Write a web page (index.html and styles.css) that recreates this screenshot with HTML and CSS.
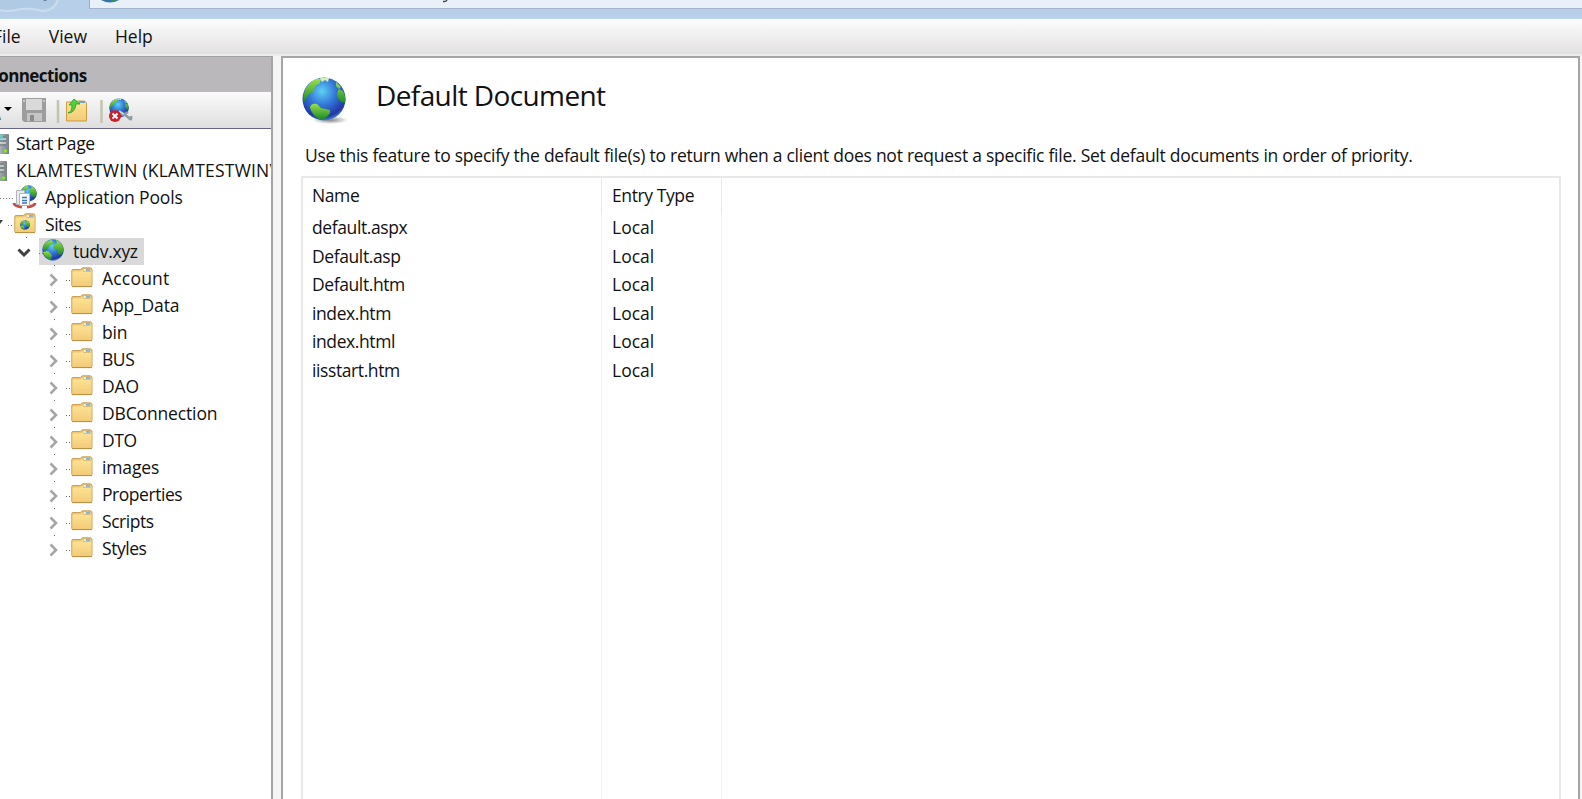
FILE: index.html
```html
<!DOCTYPE html>
<html lang="en">
<head>
<meta charset="utf-8">
<title>Internet Information Services (IIS) Manager</title>
<link rel="stylesheet" href="styles.css">
</head>
<body>
<svg class="defs" width="0" height="0">
  <defs>
    <radialGradient id="sea" cx="45%" cy="32%" r="70%"><stop offset="0" stop-color="#5fd0f4"/><stop offset=".45" stop-color="#3378d8"/><stop offset=".85" stop-color="#2336a4"/><stop offset="1" stop-color="#4a8fd8"/></radialGradient>
    <linearGradient id="land" x1="0" y1="0" x2="0" y2="1"><stop offset="0" stop-color="#9be04a"/><stop offset="1" stop-color="#1b8a28"/></linearGradient>
    <linearGradient id="gold" x1="0" y1="0" x2="0" y2="1"><stop offset="0" stop-color="#fde596"/><stop offset="1" stop-color="#f2cb78"/></linearGradient>
    <linearGradient id="metal" x1="0" y1="0" x2="1" y2="0"><stop offset="0" stop-color="#c9ced0"/><stop offset="1" stop-color="#778084"/></linearGradient>
    <radialGradient id="shade"><stop offset="0" stop-color="#777" stop-opacity=".9"/><stop offset="1" stop-color="#777" stop-opacity="0"/></radialGradient>
    <symbol id="globe" viewBox="0 0 44 44">
      <circle cx="22" cy="22" r="21.5" fill="url(#sea)"/>
      <path fill="url(#land)" d="M2 25C0 15 5 6 14 2l5 0-1 4-5 3-1 5-5 3-2 3z"/>
      <path fill="#d9efbb" d="M18 1h9l-1 4-3-2-3 2z"/>
      <path fill="url(#land)" d="M8 31c0-4 4-5 7-4l4 4 9 2c1 4-3 7-6 9-6 1-11-3-14-11z"/>
      <path fill="url(#land)" d="M37 12l4 2c2 4 3 8 2 12l-4-1-3-4-1-5zM34 5l5 5-2 2-3-3z"/>
    </symbol>
    <symbol id="site" viewBox="0 0 22 22">
      <circle cx="11" cy="11" r="10.7" fill="url(#sea)"/>
      <path fill="url(#land)" d="M1 9C2 4 6 1 10 1l1 3-4 3-1 3-4 2z"/>
      <path fill="url(#land)" d="M1 13l5-1 4 4-1 5C5 20 2 17 1 13z"/>
      <path fill="url(#land)" d="M14 1c4 1 7 5 8 10l-3 5-3-1-1-4-4-2 2-4 2-1z"/>
    </symbol>
    <symbol id="folder" viewBox="0 0 22 21">
      <path d="M.8 3.5q0-1 1-1h7.5l2-1.700h7.700q2 0 2 2V18.500q0 1-1 1H1.800q-1 0-1-1z" fill="#eec771" stroke="#c8a05a"/>
      <path d="M1.500 5.500q0-1 1-1h7l2-1.500h9v16h-19z" fill="url(#gold)"/>
      <rect x="12" y="1.500" width="8" height="3" rx="1" fill="#f6ead0" stroke="#c8a05a" stroke-width=".6"/>
      <rect x="15" y="2.200" width="4" height="1.500" fill="#6ba6cc"/>
      <path d="M1 19.600h20" stroke="#b89048"/>
    </symbol>
    <symbol id="server" viewBox="0 0 14 21">
      <path d="M0 1h13q1 0 1 1v19H0z" fill="url(#metal)"/>
      <path d="M0 4h11M0 8h11M0 12h11" stroke="#6a757a" stroke-width="1.200"/>
      <path d="M0 6h11M0 10h11" stroke="#e9eeee"/>
      <circle cx="10.500" cy="18" r="1.700" fill="#7cf026"/>
    </symbol>
    <symbol id="closed" viewBox="0 0 10 14"><path d="M1.500 1.500L7 7l-5.500 5.500" fill="none" stroke="#a6a6a6" stroke-width="2.600"/></symbol>
    <symbol id="open" viewBox="0 0 14 10"><path d="M1.500 1.500L7 7l5.500-5.500" fill="none" stroke="#404040" stroke-width="3"/></symbol>
    <symbol id="leaf" viewBox="0 0 45 27"><use href="#closed" y="8" x="0" width="10" height="14"/><path d="M5 .5h1M17 15.500h4" stroke="#666" stroke-dasharray="1 2"/><use href="#folder" x="22" y="2" width="22" height="21"/></symbol>
  </defs>
</svg>
<div class="window">
  <header class="titlebar">
    <svg class="nav" width="89" height="18"><path d="M0 0h56q-3 8-14 9-14-3-26 1Q7 12 0 9z" fill="#abc6df" opacity=".5"/><path d="M0 10q7 2 16 0 12-3 26 1 12 0 16-11" fill="none" stroke="#c9dcf0" stroke-width="2"/><path d="M43 0h4l-1 1h-2z" fill="#6b7f93"/></svg>
    <div class="address">
      <svg class="address-globe" width="18" height="3"><path d="M0 0h18q-9 5-18 0" fill="#3775a8"/><path d="M10 0h5l-4 2z" fill="#369555"/></svg>
      <svg class="address-tail" width="6" height="3"><path d="M5 0q-1 2-4 1.500" fill="none" stroke="#444" stroke-width="1.500"/></svg>
    </div>
  </header>
  <nav class="menubar"><span class="m-file">File</span><span>View</span><span>Help</span></nav>
  <div class="workspace">
    <aside class="connections">
      <h2 class="pane-title"><span>Connections</span></h2>
      <div class="toolbar">
        <svg width="272" height="36">
          <path d="M0 24v4h1z" fill="#2b80a0"/><path d="M4 15h8l-4 4z" fill="#000"/>
          <path d="M22 6h24v24H24l-2-2z" fill="#9d9d9d"/><path d="M26 7h16v11H26z" fill="#d9d9d9"/><path d="M27 21h15v8H27z" fill="#c5c5c5"/><path d="M30 23h4v6h-4z" fill="#8b8b8b"/><path d="M23 9h2M43 9h2" stroke="#eee"/>
          <path d="M58 8v23M101.500 8v23" stroke="#c4c3ae" stroke-width="2.500"/>
          <path d="M66.500 10V29h20V11l-2-2h-7l-2 1z" fill="url(#gold)" stroke="#c99b45"/><path d="M79 10h6" stroke="#6ba6cc" stroke-width="2"/>
          <path d="M68 21q4-1 4-8h-3l5-6 6 5h-4q-1 9-8 9z" fill="#4ed13b" stroke="#279b2b" stroke-width=".8"/>
          <use href="#globe" x="109" y="6" width="20" height="20"/>
          <path d="M119 20l4 3 5-3M124 22l5 4q3 3 2-2" fill="none" stroke="#8b9aa3" stroke-width="2.500"/><path d="M119 19l5 3" stroke="#c7d4d9" stroke-width="2"/>
          <circle cx="115" cy="24" r="6" fill="#c9202c"/><path d="M112.500 21.500l5 5m0-5l-5 5" stroke="#fff" stroke-width="2"/>
        </svg>
      </div>
      <div class="tree">
        <div class="row root"><svg class="srv" width="9" height="22"><use href="#server" x="-5" width="14" height="21"/><path d="M0 1q3 0 3 5H0z" fill="#6fc8c4"/></svg><span class="tight">Start Page</span></div>
        <div class="row root"><svg class="srv s2" width="9" height="22"><use href="#server" x="-7" width="14" height="21"/></svg><span class="caps">KLAMTESTWIN (KLAMTESTWIN\</span></div>
        <div class="row second"><svg width="37" height="27"><path d="M0 14.500h13" stroke="#777" stroke-dasharray="1 2"/><use href="#site" x="20" y="1" width="17" height="17"/><path d="M14 19q0 3 8 4M35 19q0 3-8 4" fill="none" stroke="#c94d43" stroke-width="3"/><path d="M16.500 6.500h8v14h-8z" fill="#e6ebee" stroke="#b0b6bb"/><path d="M19.500 9.500h10v12h-10z" fill="#f9fbfd" stroke="#b0b6bb"/><path d="M22 13.500h5M22 16.500h5M22 19h5" stroke="#3f73b9" stroke-width="1.300"/></svg><span>Application Pools</span></div>
        <div class="row second"><svg width="37" height="27"><path d="M0 9l3 0-3 4z" fill="#404040"/><path d="M8 14.500h6M26 26.500h1" stroke="#777" stroke-dasharray="1 2"/><use href="#folder" x="14" y="2" width="22" height="21"/><use href="#site" x="20" y="9" width="10" height="10"/></svg><span class="tight">Sites</span></div>
        <div class="row site"><svg class="chev" width="14" height="10"><use href="#open" width="14" height="10"/></svg><div class="selected"><svg width="27" height="27"><path d="M0 15.500h4" stroke="#777" stroke-dasharray="1 2"/><use href="#site" x="3" y="1" width="22" height="22"/></svg><span>tudv.xyz</span></div></div>
        <div class="row leaf"><svg width="45" height="27"><use href="#leaf" width="45" height="27"/></svg><span class="wide">Account</span></div>
        <div class="row leaf"><svg width="45" height="27"><use href="#leaf" width="45" height="27"/></svg><span>App_Data</span></div>
        <div class="row leaf"><svg width="45" height="27"><use href="#leaf" width="45" height="27"/></svg><span>bin</span></div>
        <div class="row leaf"><svg width="45" height="27"><use href="#leaf" width="45" height="27"/></svg><span class="tight">BUS</span></div>
        <div class="row leaf"><svg width="45" height="27"><use href="#leaf" width="45" height="27"/></svg><span>DAO</span></div>
        <div class="row leaf"><svg width="45" height="27"><use href="#leaf" width="45" height="27"/></svg><span>DBConnection</span></div>
        <div class="row leaf"><svg width="45" height="27"><use href="#leaf" width="45" height="27"/></svg><span class="tight">DTO</span></div>
        <div class="row leaf"><svg width="45" height="27"><use href="#leaf" width="45" height="27"/></svg><span>images</span></div>
        <div class="row leaf"><svg width="45" height="27"><use href="#leaf" width="45" height="27"/></svg><span class="tight">Properties</span></div>
        <div class="row leaf"><svg width="45" height="27"><use href="#leaf" width="45" height="27"/></svg><span class="tight">Scripts</span></div>
        <div class="row leaf"><svg width="45" height="27"><use href="#leaf" width="45" height="27"/></svg><span class="tight">Styles</span></div>
      </div>
    </aside>
    <main class="feature">
      <div class="heading">
        <svg width="48" height="50"><ellipse cx="28" cy="43" rx="18" ry="4" fill="url(#shade)"/><use href="#globe" width="44" height="44"/></svg>
        <h1>Default Document</h1>
      </div>
      <p class="about">Use this feature to specify the default file(s) to return when a client does not request a specific file. Set default documents in order of priority.</p>
      <div class="list">
        <div class="col name"><div class="th">Name</div><div class="td">default.aspx</div><div class="td">Default.asp</div><div class="td">Default.htm</div><div class="td">index.htm</div><div class="td">index.html</div><div class="td">iisstart.htm</div></div>
        <div class="col type"><div class="th">Entry Type</div><div class="td">Local</div><div class="td">Local</div><div class="td">Local</div><div class="td">Local</div><div class="td">Local</div><div class="td">Local</div></div>
      </div>
    </main>
  </div>
</div>
</body>
</html>
```

FILE: styles.css
```css
* { box-sizing: border-box; }
body { margin: 0; background: #f5f5f5; color: #111; font: 17.500px/27px "Open Sans", "Noto Sans", sans-serif; }
.defs { position: absolute; }
.window { width: 1582px; height: 799px; overflow: hidden; display: flex; flex-direction: column; }
.titlebar { height: 19px; flex: none; display: flex; background: #b7cfe8; border-bottom: 1px solid #bdd9ec; }
.nav { flex: none; }
.address { flex: 1; height: 9px; background: #eaf0f8; border-left: 1px solid #9cafc5; border-bottom: 1px solid #a3b6ce; display: flex; align-items: flex-start; padding-left: 11px; }
.address-tail { margin-left: 323px; }
.menubar { height: 37px; flex: none; display: flex; gap: 28px; padding-top: 4px; background: linear-gradient(#fdfdfd, #e8e6e7 75%, #e1e1e1 94%, #ececec 96%); }
.m-file { margin-left: -7px; }
.workspace { flex: 1; min-height: 0; display: flex; gap: 8px; padding-right: 2px; }
.connections { width: 273px; flex: none; background: #fff; border-top: 1px solid #a0a0a0; border-right: 2px solid #a5a5a5; overflow: hidden; }
.pane-title { margin: 0; height: 35px; background: #bbb8bb; font-size: 17px; line-height: 37px; font-weight: 700; letter-spacing: -.6px; overflow: hidden; }
.pane-title span { margin-left: -12px; }
.toolbar { height: 37px; background: linear-gradient(#fbfbfb, #dedede); border-bottom: 1px solid #68658b; }
.toolbar svg { display: block; }
.tree { padding-top: 1px; letter-spacing: -.15px; }
.row { height: 27px; display: flex; white-space: nowrap; line-height: 26px; }
.row svg { flex: none; }
.caps { letter-spacing: .2px; }
.wide { letter-spacing: .2px; }
.tight { letter-spacing: -.45px; }
.root { gap: 7px; }
.srv { margin-top: 3px; }
.second { gap: 8px; }
.site { padding-left: 17px; gap: 8px; }
.chev { margin-top: 10px; }
.selected { display: flex; gap: 7px; width: 105px; background: #d9d9d9; letter-spacing: -.3px; }
.leaf { padding-left: 49px; gap: 8px; line-height: 27px; }
.feature { flex: 1; display: flex; flex-direction: column; background: #fff; border: 2px solid #a5a5a5; border-bottom: 0; padding: 0 17px 0 18px; }
.heading { height: 84px; display: flex; gap: 26px; padding: 19px 0 0 1px; }
h1 { margin: 0; font-size: 28px; line-height: 36px; font-weight: 400; letter-spacing: -.6px; }
.about { margin: 0 0 8px 4px; line-height: 26px; white-space: nowrap; letter-spacing: -.26px; }
.list { flex: 1; display: flex; border: 2px solid #e8e8e8; border-bottom: 0; letter-spacing: -.4px; }
.col { background: linear-gradient(#e8e8e8 36px, #edf4f7 36px) right / 1px 100% no-repeat; padding-left: 9px; }
.name { width: 299px; }
.type { width: 120px; padding-left: 10px; }
.type .td { letter-spacing: 0; }
.th { height: 36px; line-height: 34px; }
.td { height: 28.500px; line-height: 27.500px; }
```
